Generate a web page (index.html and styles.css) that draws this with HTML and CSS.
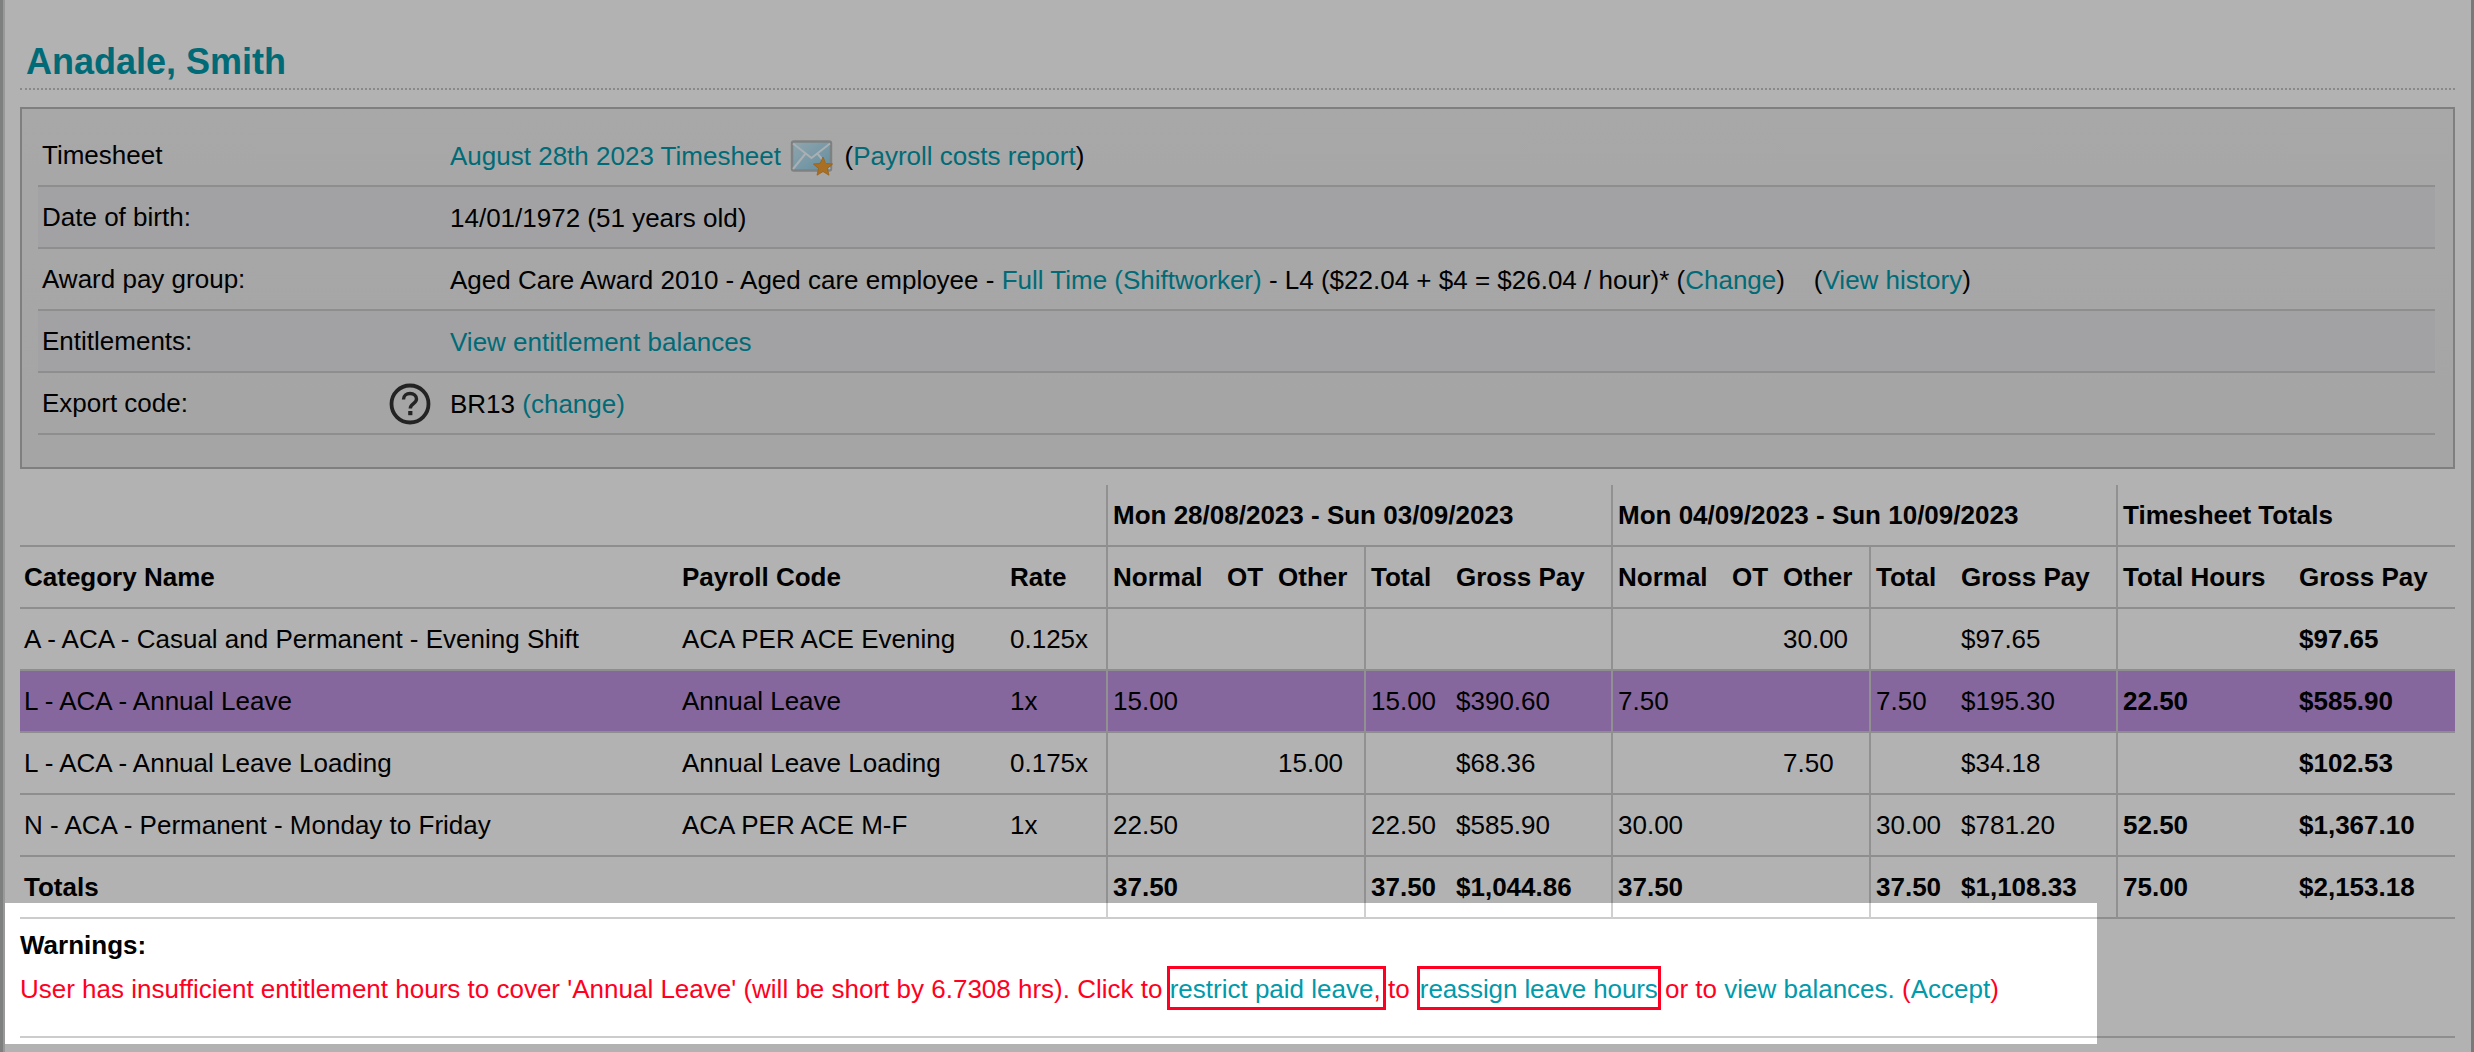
FILE: index.html
```html
<!DOCTYPE html>
<html lang="en">
<head>
<meta charset="utf-8">
<title>Anadale, Smith</title>
<link rel="stylesheet" href="styles.css">
</head>
<body>
<div class="page">
  <h1 class="name">Anadale, Smith</h1>
  <section class="details">
    <div class="row">
      <div class="label">Timesheet</div>
      <div class="value"><a href="#">August 28th 2023 Timesheet</a>
        <svg class="mail" viewBox="0 0 46 38" aria-hidden="true">
          <defs>
            <linearGradient id="env" x1="0" y1="0" x2="1" y2="1">
              <stop offset="0" stop-color="#cfeefa"/>
              <stop offset="1" stop-color="#8fcbe4"/>
            </linearGradient>
          </defs>
          <rect x="2" y="1.5" width="39" height="29" rx="2" fill="url(#env)" stroke="#b5b9bb" stroke-width="2.5"/>
          <path d="M3 3.5 L21.5 18 L40 3.5 M3 29 L16 13 M40 29 L27 13" fill="none" stroke="#f2fbff" stroke-width="2"/>
          <path d="M33 17 L35.8 23.4 L42.6 24 L37.4 28.5 L39 35.2 L33 31.6 L27 35.2 L28.6 28.5 L23.4 24 L30.2 23.4 Z" fill="#f2a032" stroke="#d98a20" stroke-width=".8"/>
        </svg>
        (<a href="#">Payroll costs report</a>)</div>
    </div>
    <div class="row alt">
      <div class="label">Date of birth:</div>
      <div class="value">14/01/1972 (51 years old)</div>
    </div>
    <div class="row">
      <div class="label">Award pay group:</div>
      <div class="value">Aged Care Award 2010 - Aged care employee - <a href="#">Full Time (Shiftworker)</a> - L4 ($22.04 + $4 = $26.04 / hour)* (<a href="#">Change</a>) &nbsp;&nbsp; (<a href="#">View history</a>)</div>
    </div>
    <div class="row alt">
      <div class="label">Entitlements:</div>
      <div class="value"><a href="#">View entitlement balances</a></div>
    </div>
    <div class="row">
      <div class="label">Export code:
        <svg class="help" viewBox="0 0 42 42" aria-hidden="true">
          <circle cx="21" cy="21" r="18.5" fill="none" stroke="#333" stroke-width="3.8"/>
          <path d="M14.5 16.5 C14.5 12.5 17.5 10.5 21 10.5 C24.8 10.5 27.5 12.8 27.5 16 C27.5 20.5 21.3 20.8 21.3 25.5" fill="none" stroke="#333" stroke-width="3.4"/>
          <rect x="19.2" y="28" width="4.2" height="4.2" fill="#333"/>
        </svg>
      </div>
      <div class="value">BR13 <a href="#">(change)</a></div>
    </div>
  </section>

  <table class="hours">
    <colgroup>
      <col class="c-name"><col class="c-code"><col class="c-rate">
      <col class="c-normal"><col class="c-ot"><col class="c-other"><col class="c-total"><col class="c-gross">
      <col class="c-normal"><col class="c-ot"><col class="c-other"><col class="c-total"><col class="c-gross">
      <col class="c-thours"><col class="c-tgross">
    </colgroup>
    <thead>
      <tr>
        <th colspan="3"></th>
        <th colspan="5" class="sep">Mon 28/08/2023 - Sun 03/09/2023</th>
        <th colspan="5" class="sep">Mon 04/09/2023 - Sun 10/09/2023</th>
        <th colspan="2" class="sep">Timesheet Totals</th>
      </tr>
      <tr>
        <th>Category Name</th><th>Payroll Code</th><th>Rate</th>
        <th class="sep">Normal</th><th>OT</th><th>Other</th><th class="sep">Total</th><th>Gross Pay</th>
        <th class="sep">Normal</th><th>OT</th><th>Other</th><th class="sep">Total</th><th>Gross Pay</th>
        <th class="sep">Total Hours</th><th>Gross Pay</th>
      </tr>
    </thead>
    <tbody>
      <tr>
        <td>A - ACA - Casual and Permanent - Evening Shift</td><td>ACA PER ACE Evening</td><td>0.125x</td>
        <td class="sep"></td><td></td><td></td><td class="sep"></td><td></td>
        <td class="sep"></td><td></td><td>30.00</td><td class="sep"></td><td>$97.65</td>
        <td class="sep"></td><td class="strong">$97.65</td>
      </tr>
      <tr class="flagged">
        <td>L - ACA - Annual Leave</td><td>Annual Leave</td><td>1x</td>
        <td class="sep">15.00</td><td></td><td></td><td class="sep">15.00</td><td>$390.60</td>
        <td class="sep">7.50</td><td></td><td></td><td class="sep">7.50</td><td>$195.30</td>
        <td class="sep strong">22.50</td><td class="strong">$585.90</td>
      </tr>
      <tr>
        <td>L - ACA - Annual Leave Loading</td><td>Annual Leave Loading</td><td>0.175x</td>
        <td class="sep"></td><td></td><td>15.00</td><td class="sep"></td><td>$68.36</td>
        <td class="sep"></td><td></td><td>7.50</td><td class="sep"></td><td>$34.18</td>
        <td class="sep"></td><td class="strong">$102.53</td>
      </tr>
      <tr>
        <td>N - ACA - Permanent - Monday to Friday</td><td>ACA PER ACE M-F</td><td>1x</td>
        <td class="sep">22.50</td><td></td><td></td><td class="sep">22.50</td><td>$585.90</td>
        <td class="sep">30.00</td><td></td><td></td><td class="sep">30.00</td><td>$781.20</td>
        <td class="sep strong">52.50</td><td class="strong">$1,367.10</td>
      </tr>
    </tbody>
    <tfoot>
      <tr>
        <th colspan="3">Totals</th>
        <th class="sep">37.50</th><th></th><th></th><th class="sep">37.50</th><th>$1,044.86</th>
        <th class="sep">37.50</th><th></th><th></th><th class="sep">37.50</th><th>$1,108.33</th>
        <th class="sep">75.00</th><th>$2,153.18</th>
      </tr>
    </tfoot>
  </table>

  <section class="warnings">
    <div class="warn-title">Warnings:</div>
    <div class="warn-text">User has insufficient entitlement hours to cover 'Annual Leave' (will be short by 6.7308 hrs). Click to <span class="callout first"><a href="#">restrict paid leave</a>,</span> to <span class="callout second"><a href="#">reassign leave hours</a></span> or to <a href="#">view balances.</a> (<a href="#">Accept</a>)</div>
  </section>
</div>
<div class="spotlight"></div>
</body>
</html>
```
FILE: styles.css
```css
html, body {
  margin: 0;
  height: 1052px;
  overflow: hidden;
  background: #fff;
}

body {
  position: relative;
  font-family: "Liberation Sans", Arial, sans-serif;
  font-size: 26px;
  color: #000;
}

a {
  color: #009aab;
  text-decoration: none;
}

.page {
  box-sizing: border-box;
  height: 1052px;
  padding: 0 16px 0 17px;
  border-left: 3px solid #b4b8b6;
  border-right: 3px solid #aeaeae;
  box-shadow: inset 2px 0 0 #dcdcdc;
}

.name {
  margin: 0 0 17px;
  padding-top: 41px;
  height: 47px;
  border-bottom: 2px dotted #c4c4c4;
  font-size: 36px;
  line-height: 42px;
  font-weight: bold;
  color: #009aab;
  text-indent: 6px;
}

.details {
  padding: 16px 18px 32px 16px;
  border: 2px solid #b6b6b6;
  background: linear-gradient(#f1f1f1, #ececec);
}

.row {
  display: grid;
  grid-template-columns: 408px 1fr;
  align-items: center;
  box-sizing: border-box;
  height: 62px;
  padding-left: 4px;
  padding-top: 1px;
  border-bottom: 2px solid #cccccc;
}

.row.alt {
  background: #e8e9ec;
}

.label {
  display: flex;
  align-items: center;
  justify-content: space-between;
  padding-right: 19px;
}

.value {
  line-height: 30px;
}

.mail {
  width: 46px;
  height: 38px;
  margin: -10px 1px -15px 2px;
  vertical-align: 2px;
}

.help {
  width: 42px;
  height: 42px;
}

.hours {
  width: 2435px;
  margin-top: 16px;
  table-layout: fixed;
  border-collapse: separate;
  border-spacing: 0;
}

.c-name { width: 657px; }
.c-code { width: 328px; }
.c-rate { width: 101px; }
.c-normal { width: 116px; }
.c-ot { width: 51px; }
.c-other { width: 91px; }
.c-total { width: 87px; }
.c-gross { width: 160px; }
.c-thours { width: 178px; }
.c-tgross { width: 161px; }

.hours tr {
  height: 62px;
}

.hours th,
.hours td {
  padding: 1px 0 0 5px;
  border-bottom: 2px solid #cccccc;
  text-align: left;
  white-space: nowrap;
}

.hours tr > :first-child {
  padding-left: 4px;
}

.hours .sep {
  border-left: 2px solid #d0d0d0;
}

.hours .strong {
  font-weight: bold;
}

.flagged td {
  background: #bf94e2;
}

.warnings {
  padding-bottom: 26px;
  border-bottom: 2px solid #cccccc;
}

.warn-title {
  padding-top: 11px;
  margin-bottom: 6px;
  line-height: 30px;
  font-weight: bold;
}

.warn-text {
  color: #ff0022;
  line-height: 47px;
  height: 44px;
  white-space: nowrap;
}

.callout {
  display: inline-block;
  box-sizing: border-box;
  height: 44px;
  line-height: 41px;
  margin-right: -3px;
  border: 3px solid #ff0022;
}

.callout.first {
  margin-left: -3px;
  margin-right: -5px;
  padding-right: 2px;
}

.callout.second {
  letter-spacing: -0.1px;
}

.spotlight {
  position: absolute;
  left: 5px;
  top: 903px;
  width: 2092px;
  height: 141px;
  box-shadow: 0 0 0 4000px rgba(0, 0, 0, 0.3);
  pointer-events: none;
}
```
